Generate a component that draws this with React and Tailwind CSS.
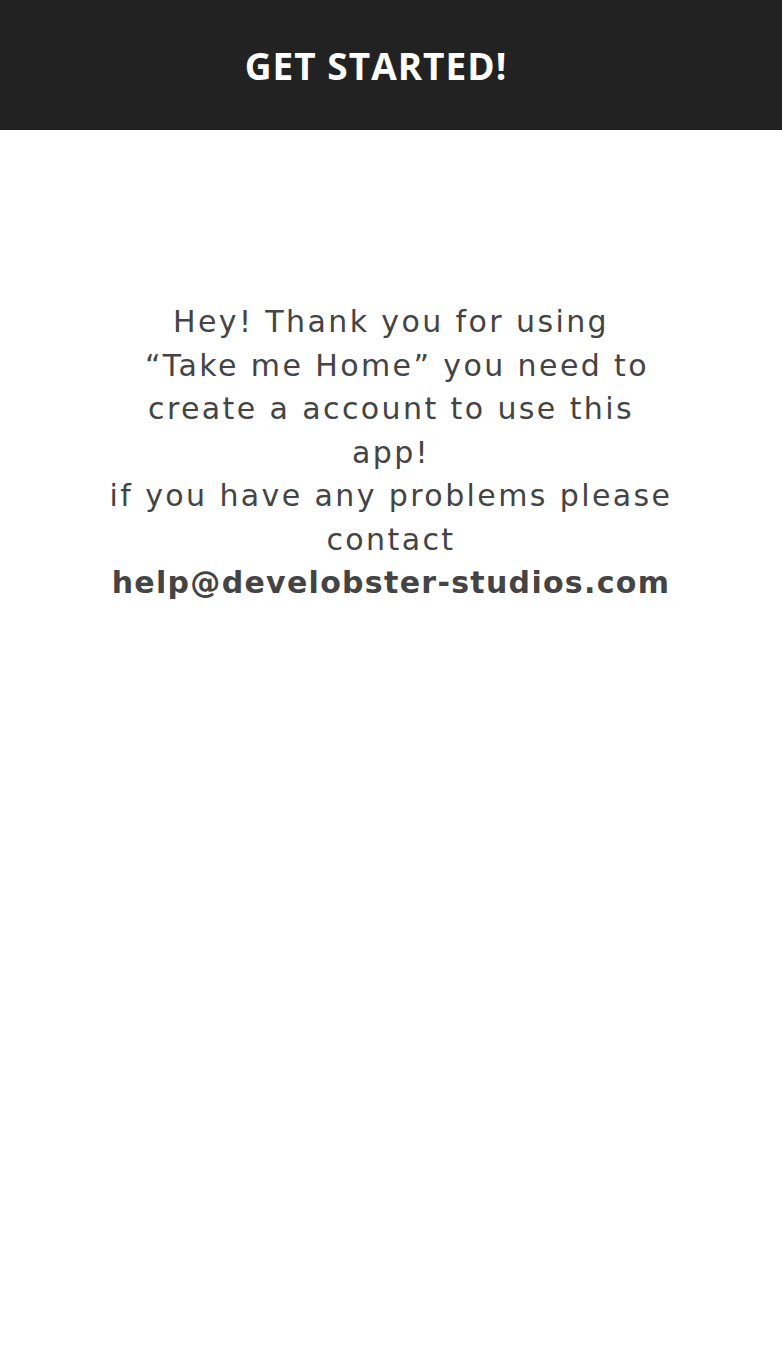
import React from 'react';

const App = () => {
  return (
    <div className="min-h-screen bg-white flex flex-col" style={{ fontFamily: '"Open Sans", sans-serif' }}>
      <header className="h-[130px] bg-[#222222] flex items-center justify-center pr-[30px]">
        <h1 className="text-[37px] font-bold text-white tracking-[1px] leading-none">GET STARTED!</h1>
      </header>

      <main
        className="flex flex-col items-center pt-[170px] text-[#444444] text-[30px] leading-[43.5px] text-center tracking-[2.4px]"
        style={{ fontFamily: '"DejaVu Sans", sans-serif' }}
      >
        <p className="whitespace-nowrap">Hey! Thank you for using </p>
        <p className="whitespace-nowrap">&nbsp;“Take me Home” you need to</p>
        <p className="whitespace-nowrap">create a account to use this</p>
        <p className="whitespace-nowrap">app!</p>
        <p className="whitespace-nowrap">if you have any problems please</p>
        <p className="whitespace-nowrap">contact</p>
        <p className="whitespace-nowrap font-bold tracking-[1.3px]">help@develobster-studios.com</p>
      </main>
    </div>
  );
};

export default App;
